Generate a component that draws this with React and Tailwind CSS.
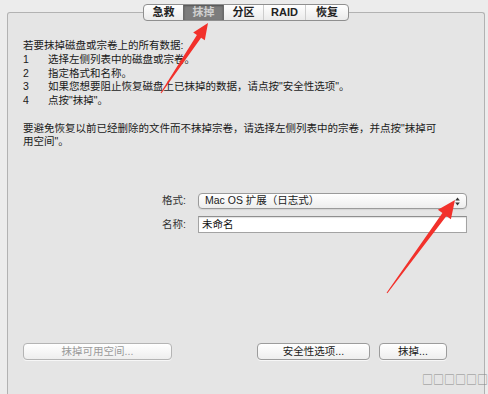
import React from 'react';

const tabs = [
  { label: '急救', w: 'w-[39px]' },
  { label: '抹掉', w: 'w-[40px]', active: true },
  { label: '分区', w: 'w-[40px]' },
  { label: 'RAID', w: 'w-[42px]' },
  { label: '恢复', w: 'w-[43px]' },
];

const steps = [
  '选择左侧列表中的磁盘或宗卷。',
  '指定格式和名称。',
  '如果您想要阻止恢复磁盘上已抹掉的数据，请点按"安全性选项"。',
  '点按"抹掉"。',
];

function Button({ children, disabled, className }) {
  return (
    <div
      className={
        'h-[17px] rounded-[4px] border border-[#9c9c9c] bg-linear-to-b from-white to-[#eeeeee] flex items-center justify-center text-[10.5px] shadow-[0_1px_0_rgba(255,255,255,0.7)] ' +
        (disabled ? 'text-[#9a9a9a] border-[#b4b4b4]' : 'text-[#1a1a1a]') +
        ' ' + className
      }
    >
      {children}
    </div>
  );
}

export default function App() {
  return (
    <div className="w-[488px] h-[394px] bg-[#ececec] relative overflow-hidden font-['Liberation_Sans','Noto_Sans_CJK_SC',sans-serif] text-[#1a1a1a]">
      <div className="ml-[7px] mt-[12px] w-[478px] h-[382px] border border-b-0 border-[#b2b2b2] bg-[#e5e5e5] rounded-t-[3px] flex flex-col">

        {/* segmented tabs */}
        <div className="flex justify-center -mt-[9px]">
          <div className="flex h-[17px] rounded-[4px] border border-[#8f8f8f] overflow-hidden bg-linear-to-b from-white to-[#ebebeb]">
            {tabs.map((t, i) => (
              <div
                key={t.label}
                className={
                  t.w + ' flex items-center justify-center text-[11px] font-semibold ' +
                  (i > 0 ? 'border-l ' : '') +
                  (t.active
                    ? 'bg-[#7c7c7c] text-[#cfcfcf] border-[#6a6a6a] shadow-[inset_0_1px_2px_rgba(0,0,0,0.35)]'
                    : i === 2 ? 'border-[#6a6a6a] text-[#222]' : 'border-[#cdcdcd] text-[#222]')
                }
              >
                {t.label}
              </div>
            ))}
          </div>
        </div>

        {/* instructions */}
        <div className="mt-[18px] pl-[15px] text-[10.5px] leading-[13.75px]">
          <div>若要抹掉磁盘或宗卷上的所有数据:</div>
          {steps.map((s, i) => (
            <div key={i} className="flex">
              <span className="w-[25px]">{i + 1}</span>
              <span>{s}</span>
            </div>
          ))}
          <div className="h-[13.75px]" />
          <div>
            要避免恢复以前已经删除的文件而不抹掉宗卷，请选择左侧列表中的宗卷，并点按"抹掉可
            <br />
            用空间"。
          </div>
        </div>

        {/* format */}
        <div className="mt-[44px] flex items-center">
          <div className="w-[178px] text-right text-[10.5px] text-[#333]">格式:</div>
          <div className="ml-[12px] w-[269px] h-[16px] rounded-[4px] border border-[#9a9a9a] bg-linear-to-b from-white to-[#ededed] flex items-center pl-[6px] pr-[6px] shadow-[0_1px_1px_rgba(0,0,0,0.08)]">
            <span className="flex-1 text-[10.5px] text-[#1a1a1a]">Mac OS 扩展（日志式）</span>
            <svg width="5" height="9" viewBox="0 0 5 9">
              <path d="M2.5 0.5 L4.8 3.5 L0.2 3.5 Z" fill="#333" />
              <path d="M2.5 8.5 L4.8 5.5 L0.2 5.5 Z" fill="#333" />
            </svg>
          </div>
        </div>

        {/* name */}
        <div className="mt-[7px] flex items-center">
          <div className="w-[178px] text-right text-[10.5px] text-[#333]">名称:</div>
          <div className="ml-[12px] w-[269px] h-[17px] border border-[#a3a3a3] border-t-[#8e8e8e] bg-white flex items-center pl-[3px] shadow-[inset_0_1px_1px_rgba(0,0,0,0.12)]">
            <span className="text-[10.5px] text-[#111]">未命名</span>
          </div>
        </div>

        {/* buttons */}
        <div className="mt-[110px] flex">
          <Button disabled className="ml-[15px] w-[149px]">抹掉可用空间...</Button>
          <Button className="ml-[85px] w-[113px]">安全性选项...</Button>
          <Button className="ml-[9px] w-[68px]">抹掉...</Button>
        </div>
      </div>

      {/* tofu watermark */}
      <div className="absolute left-[422px] top-[373px] whitespace-nowrap text-[11px] leading-[12px] text-[#8a8a8a] font-['Noto_Sans_CJK_SC',sans-serif]">
        □□□□□□
      </div>

      {/* red annotation arrows */}
      <svg className="absolute inset-0 pointer-events-none" width="488" height="394" viewBox="0 0 488 394">
        <polygon
          points="160.6,92.7 196.9,34.9 193.2,32.4 208,23 204.8,40.2 201.1,37.7 161.4,93.3"
          fill="#f2312b"
        />
        <polygon
          points="386.6,292.7 442.4,213 437.9,209.8 455,200 450.9,219.2 446.4,216 387.4,293.3"
          fill="#f2312b"
        />
      </svg>
    </div>
  );
}
